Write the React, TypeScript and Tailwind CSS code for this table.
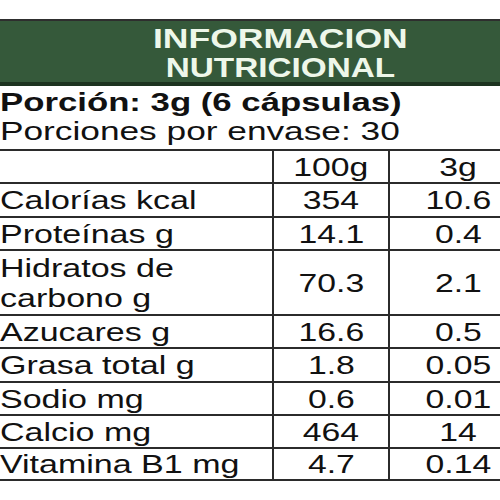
import React from 'react';

const rows = [
    { label: ['Calorías kcal'], a: '354', b: '10.6', h: 'h-[34px]' },
    { label: ['Proteínas g'], a: '14.1', b: '0.4', h: 'h-[33px]' },
    { label: ['Hidratos de', 'carbono g'], a: '70.3', b: '2.1', h: 'h-[65px]' },
    { label: ['Azucares g'], a: '16.6', b: '0.5', h: 'h-[33px]' },
    { label: ['Grasa total g'], a: '1.8', b: '0.05', h: 'h-[34px]' },
    { label: ['Sodio mg'], a: '0.6', b: '0.01', h: 'h-[33px]' },
    { label: ['Calcio mg'], a: '464', b: '14', h: 'h-[33px]' },
    { label: ['Vitamina B1 mg'], a: '4.7', b: '0.14', h: 'h-[34px] border-b-2' },
];

const App = () => {
    return (
        <div className="w-[500px] h-[500px] overflow-hidden bg-white text-[#111] font-['Liberation_Sans',Arial,sans-serif]">
            <div className="w-[560px]">
                <div className="h-[19px]" />

                {/* green title band */}
                <div className="h-[67px] border-t-2 border-b-4 border-t-[#2e2e2e] border-b-[#1d3320] bg-[#35593a] pt-[3px] text-center text-[28px] leading-[29px] font-bold text-[#eef7ea]">
                    <div>
                        <span className="inline-block scale-x-[1.27]">INFORMACION</span>
                    </div>
                    <div>
                        <span className="inline-block scale-x-[1.19]">NUTRICIONAL</span>
                    </div>
                </div>

                <div className="h-[63px] pt-[2px] text-[25px] leading-[29px]">
                    <div className="font-bold whitespace-nowrap">
                        <span className="inline-block origin-left scale-x-[1.39]">Porción: 3g (6 cápsulas)</span>
                    </div>
                    <div className="whitespace-nowrap">
                        <span className="inline-block origin-left scale-x-[1.41]">Porciones por envase: 30</span>
                    </div>
                </div>

                {/* table */}
                <div className="text-[25px] leading-[30px]">
                    <div className="flex h-[33px] border-t-2 border-[#2b2b2b]">
                        <div className="w-[272px]" />
                        <div className="w-[116px] flex items-center justify-center border-l-2 border-[#2b2b2b]">
                            <span className="inline-block scale-x-[1.35]">100g</span>
                        </div>
                        <div className="w-[138px] flex items-center justify-center border-l-2 border-[#2b2b2b]">
                            <span className="inline-block scale-x-[1.35]">3g</span>
                        </div>
                    </div>
                    {rows.map((r, i) => (
                        <div key={i} className={`flex border-t-2 border-[#2b2b2b] ${r.h}`}>
                            <div className="w-[272px] flex flex-col justify-center whitespace-nowrap">
                                {r.label.map((t, j) => (
                                    <div key={j}>
                                        <span className="inline-block origin-left scale-x-[1.36]">{t}</span>
                                    </div>
                                ))}
                            </div>
                            <div className="w-[116px] flex items-center justify-center border-l-2 border-[#2b2b2b]">
                                <span className="inline-block scale-x-[1.35]">{r.a}</span>
                            </div>
                            <div className="w-[138px] flex items-center justify-center border-l-2 border-[#2b2b2b]">
                                <span className="inline-block scale-x-[1.35]">{r.b}</span>
                            </div>
                        </div>
                    ))}
                </div>
            </div>
        </div>
    );
};

export default App;
